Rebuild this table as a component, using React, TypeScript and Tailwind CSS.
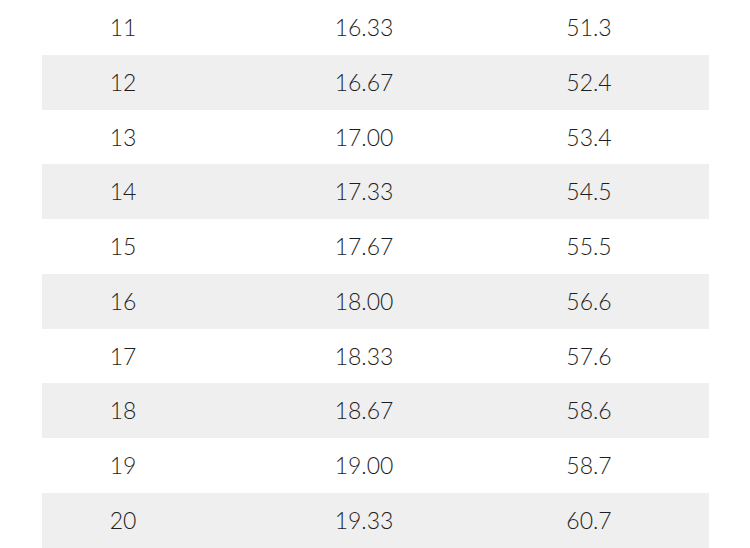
import React from "react";

const rows = [
  ["11", "16.33", "51.3"],
  ["12", "16.67", "52.4"],
  ["13", "17.00", "53.4"],
  ["14", "17.33", "54.5"],
  ["15", "17.67", "55.5"],
  ["16", "18.00", "56.6"],
  ["17", "18.33", "57.6"],
  ["18", "18.67", "58.6"],
  ["19", "19.00", "58.7"],
  ["20", "19.33", "60.7"],
];

export default function App() {
  return (
    <div className="w-[750px] h-[548px] bg-white overflow-hidden" style={{ fontFamily: "Lato, 'Open Sans', sans-serif" }}>
      <div className="ml-[42px] w-[667px] flex flex-col">
        {rows.map((r, i) => (
          <div
            key={r[0]}
            className={`h-[54.75px] grid grid-cols-[162px_320px_130px_1fr] items-center text-[23px] font-light text-[#1e1e1e] ${i % 2 === 1 ? "bg-[#efefef]" : "bg-white"}`}
          >
            <div className="text-center">{r[0]}</div>
            <div className="text-center">{r[1]}</div>
            <div className="text-center">{r[2]}</div>
            <div />
          </div>
        ))}
      </div>
    </div>
  );
}
